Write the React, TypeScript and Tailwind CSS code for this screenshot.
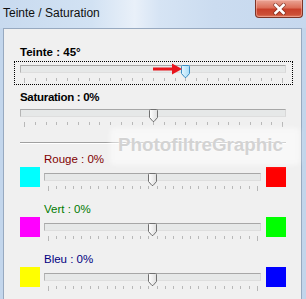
import React from "react";

const FONT = { fontFamily: '"Liberation Sans", Arial, sans-serif' };

function Thumb({ hot }: { hot?: boolean }) {
  const id = hot ? "thumbHot" : "thumbNorm";
  return (
    <svg width="9" height="13" viewBox="0 0 9 13" className="block">
      <defs>
        <linearGradient id={id} x1="0" y1="0" x2="1" y2="0">
          {hot ? (
            <>
              <stop offset="0" stopColor="#e4f6fe" />
              <stop offset="1" stopColor="#a9dcf7" />
            </>
          ) : (
            <>
              <stop offset="0" stopColor="#ffffff" />
              <stop offset="1" stopColor="#dedede" />
            </>
          )}
        </linearGradient>
      </defs>
      <path
        d="M1.5 0.5 H7.5 Q8.5 0.5 8.5 1.5 V8.5 L5 12.5 H4 L0.5 8.5 V1.5 Q0.5 0.5 1.5 0.5 Z"
        fill={`url(#${id})`}
        stroke={hot ? "#3c8ec4" : "#707070"}
        strokeWidth="1"
      />
    </svg>
  );
}

function Trackbar({
  width,
  wClass,
  frac,
  n,
  hot,
}: {
  width: number;
  wClass: string;
  frac: number;
  n: number;
  hot?: boolean;
}) {
  const span = width - 8;
  const thumbLeft = Math.round(4 + frac * span - 4.5);
  const xs = Array.from({ length: n + 1 }, (_, i) => Math.round(4 + (i * span) / n) + 0.5);
  return (
    <div className={`relative shrink-0 ${wClass}`}>
      <div className="mt-[2px] h-[8px] border border-t-[#a7a7a7] border-l-[#b4b4b4] border-b-[#dedede] border-r-[#d8d8d8] bg-[#e6e8e8]" />
      <svg width={width} height={5} className="mt-[5px] block">
        {xs.map((x, i) => (
          <line
            key={i}
            x1={x}
            x2={x}
            y1={0}
            y2={i === 0 || i === n ? 5 : 3}
            stroke="#b8b8b8"
            strokeWidth="1"
          />
        ))}
      </svg>
      <div className="absolute top-0" style={{ left: thumbLeft }}>
        <Thumb hot={hot} />
      </div>
    </div>
  );
}

function ColorRow({
  label,
  labelClass,
  left,
  right,
  first,
}: {
  label: string;
  labelClass: string;
  left: string;
  right: string;
  first?: boolean;
}) {
  return (
    <div className={first ? "mt-[9px]" : "mt-[12px]"}>
      <div className={`ml-[40px] h-[13px] text-[11.5px] leading-[13px] ${labelClass}`}>{label}</div>
      <div className="mt-[1px] flex items-start pl-[16px]">
        <div className={`h-[20px] w-[20px] shrink-0 ${left}`} />
        <div className="ml-[4px] mt-[4px]">
          <Trackbar width={217} wClass="w-[217px]" frac={0.5} n={25} />
        </div>
        <div className={`ml-[5px] h-[20px] w-[20px] shrink-0 ${right}`} />
      </div>
    </div>
  );
}

export default function App() {
  return (
    <div
      className="relative flex h-[299px] w-[306px] flex-col overflow-hidden bg-[linear-gradient(to_right,#c3d6ec,#cadcf0_40%,#d9e6f5_48%,#c8daef_58%,#c2d5eb)]"
      style={FONT}
    >
      {/* Title bar */}
      <div className="relative h-[28px] shrink-0 bg-[linear-gradient(to_right,#c8daef_0%,#d2e2f3_30%,#e9f0f9_44%,#d6e4f4_52%,#cbdcf0_70%,#c6d8ee_100%)]">
        <div className="pl-[3px] pt-[6px] text-[12px] leading-[14px] text-[#0f0f0f]">
          Teinte / Saturation
        </div>
        <div className="absolute right-[3px] top-0 flex h-[18px] w-[48px] items-center justify-center rounded-b-[4px] border border-t-0 border-[#7d3426] bg-[linear-gradient(to_bottom,#eaa596_0%,#dc6f59_45%,#c8402a_55%,#cc4f36_85%,#e07c5e_100%)] shadow-[inset_0_0_0_1px_rgba(255,200,190,0.45)]">
          <svg width="13" height="12" viewBox="0 0 13 12">
            <path
              d="M2.5 2 L10.5 10 M10.5 2 L2.5 10"
              stroke="#5a1a10"
              strokeWidth="4.4"
              strokeLinecap="square"
              opacity="0.5"
            />
            <path d="M2.5 2 L10.5 10 M10.5 2 L2.5 10" stroke="#ffffff" strokeWidth="2.6" strokeLinecap="square" />
          </svg>
        </div>
      </div>

      {/* Client area */}
      <div className="relative ml-[3px] mr-[4px] flex-1 border border-b-0 border-[#97a9c0] bg-[#f0f0f0]">
        <div className="ml-[16px] mt-[16px] h-[14px] text-[11.5px] font-bold leading-[14px] text-black">
          Teinte : 45°
        </div>
        <div className="ml-[10px] mt-[2px] h-[24px] w-[279px] border border-dotted border-black pl-[5px] pt-[1px]">
          <Trackbar width={266} wClass="w-[266px]" frac={0.625} n={24} hot />
        </div>

        <div className="ml-[16px] mt-[5px] h-[14px] text-[11.5px] font-bold leading-[14px] tracking-[-0.3px] text-black">
          Saturation : 0%
        </div>
        <div className="ml-[16px] mt-[5px]">
          <Trackbar width={266} wClass="w-[266px]" frac={0.5} n={24} />
        </div>

        <div className="ml-[16px] mt-[15px] h-[2px] w-[266px] border-t border-b border-t-[#a0a0a0] border-b-white" />

        <ColorRow label="Rouge : 0%" labelClass="text-[#800000]" left="bg-[#00ffff]" right="bg-[#ff0000]" first />
        <ColorRow label="Vert : 0%" labelClass="text-[#007a00]" left="bg-[#ff00ff]" right="bg-[#00ff00]" />
        <ColorRow label="Bleu : 0%" labelClass="text-[#000080]" left="bg-[#ffff00]" right="bg-[#0000ff]" />

        {/* Watermark */}
        <div className="pointer-events-none absolute left-[106px] top-[99px] h-[37px] w-[190px] rounded-[4px] bg-white/50 blur-[2px]" />
        <div className="pointer-events-none absolute left-[114px] top-[105px] text-[18.8px] font-bold leading-[22px] text-[#d3d3d3] [text-shadow:0_0_2px_#ffffff]">
          PhotofiltreGraphic
        </div>

        {/* Red arrow annotation */}
        <svg className="pointer-events-none absolute left-[149px] top-[34px]" width="30" height="12" viewBox="0 0 30 12">
          <rect x="0" y="4.5" width="20" height="3" fill="#e8141c" />
          <polygon points="19,0.5 29,6 19,11.5" fill="#e8141c" />
        </svg>
      </div>
    </div>
  );
}
